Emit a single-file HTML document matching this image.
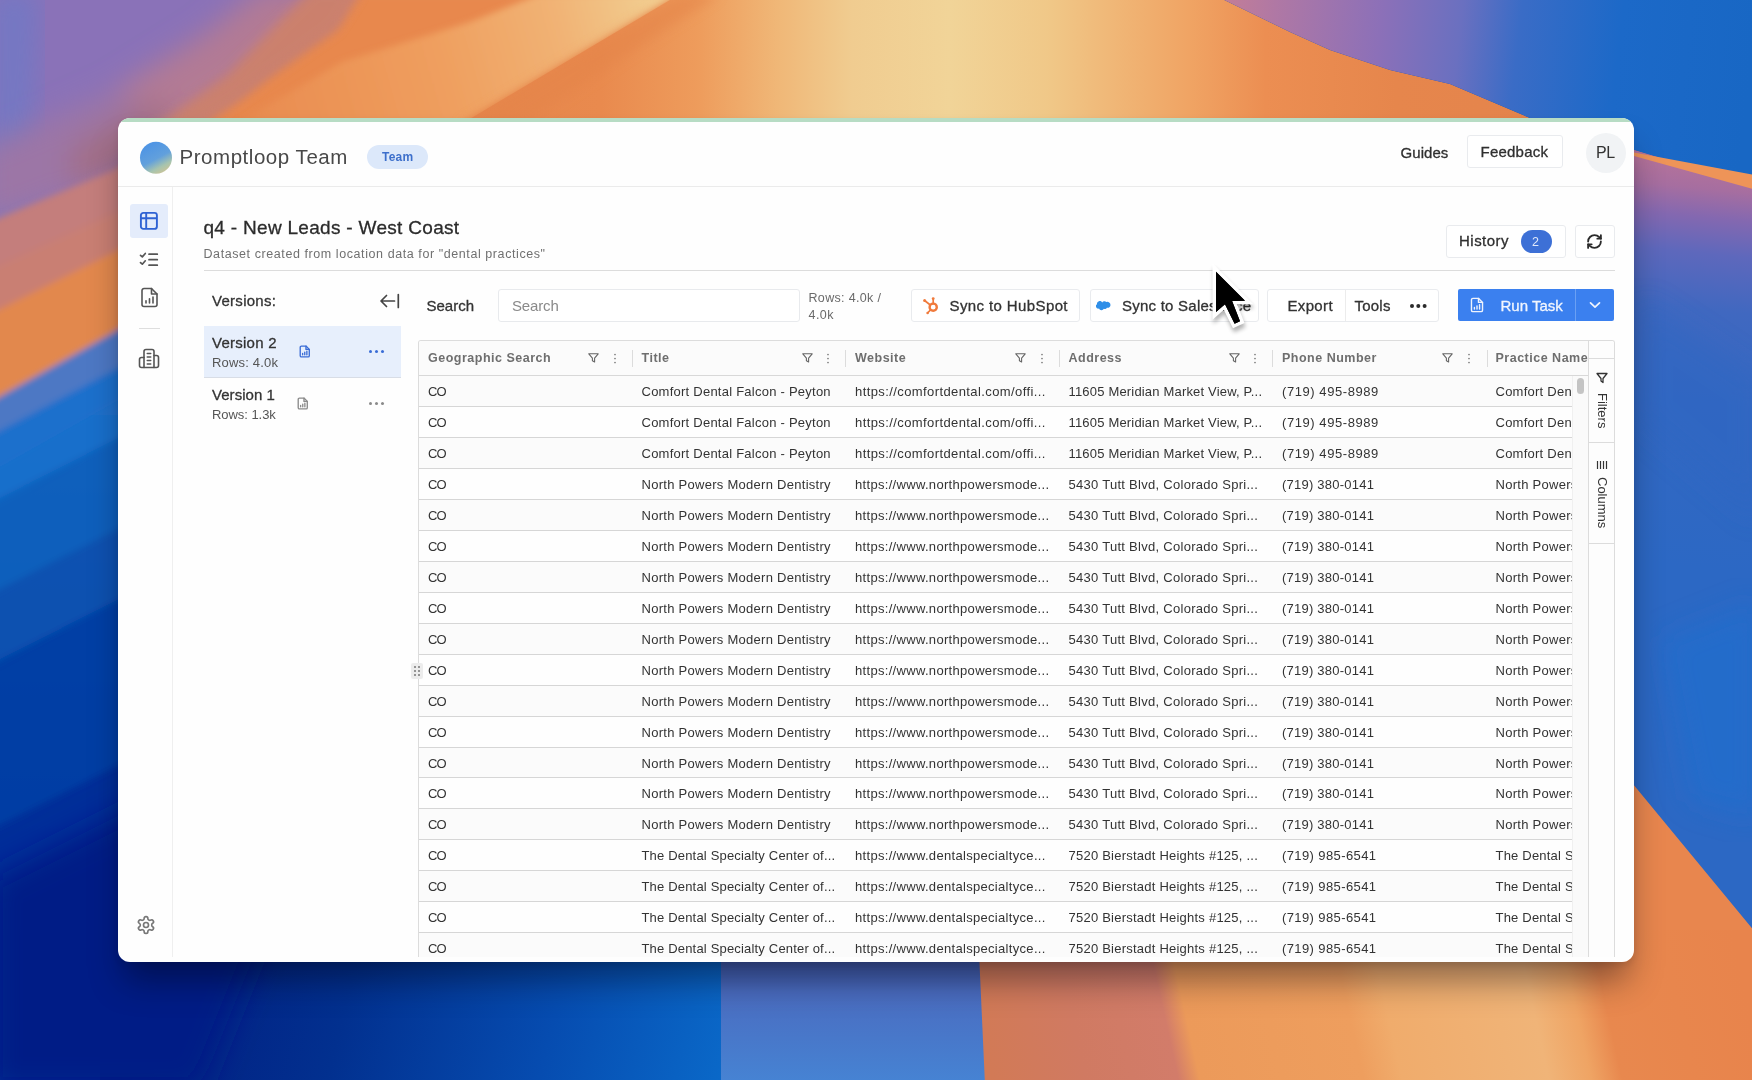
<!DOCTYPE html>
<html lang="en"><head><meta charset="utf-8"><title>Promptloop Team</title>
<style>
*{box-sizing:border-box;margin:0;padding:0}
html,body{width:1752px;height:1080px;overflow:hidden;background:#0a3a9c}
body{position:relative;font-family:"Liberation Sans",Arial,sans-serif;color:#333;-webkit-font-smoothing:antialiased}
#bg{position:absolute;left:0;top:0;display:block}
#shadow{position:absolute;left:118px;top:118px;width:1516px;height:844px;border-radius:12px;box-shadow:0 24px 34px -6px rgba(0,0,15,.42),0 3px 6px rgba(0,0,15,.08)}
#win{position:absolute;left:118px;top:118px;width:1516px;height:844px;border-radius:12px;background:#fefefe;overflow:hidden}
#greenline{position:absolute;left:0;top:0;width:100%;height:3.5px;background:#b7dcc4}
#app{will-change:transform;position:absolute;left:-118px;top:-118px;width:1752px;height:1075px;overflow:hidden;clip-path:inset(0 0 118px 0)}
.a{position:absolute}
.t{position:absolute;white-space:nowrap;line-height:1}
.m{-webkit-text-stroke:.3px currentColor}
.hl{position:absolute;height:1px;background:#e6e6e6}
.vl{position:absolute;width:1px;background:#e9e9e9}
.btn{position:absolute;border:1px solid #e9ebee;border-radius:3px;background:#fff}
/* grid */
#grid{position:absolute;left:418px;top:339.5px;border-radius:3px 3px 0 0;width:1197px;height:640px;border:1px solid #dcdcdc;border-bottom:none;background:#fff;overflow:hidden}
#ghead{position:absolute;left:0;top:0;width:1169px;height:35px;background:#fbfbfb;border-bottom:1px solid #d8d8d8}
.h{position:absolute;top:0;height:35px;width:213.5px}
.h .ht{position:absolute;left:9px;top:11px;font-size:12.5px;font-weight:700;color:#6e6e6e;line-height:1;white-space:nowrap;letter-spacing:.5px}
.h .sep{position:absolute;left:-1px;top:9px;width:1px;height:17px;background:#dcdcdc}
.h svg.f{position:absolute;right:33.5px;top:12px}
.h svg.d{position:absolute;right:16px;top:12px}
#rows{position:absolute;left:0;top:0;width:1153px;height:640px;overflow:hidden}
.row{position:absolute;left:0;width:1153px;height:31px;border-bottom:1px solid #d6d6d6;background:#fefefe}
.row.odd{background:#fbfbfb}
.c{position:absolute;top:0;height:30px;width:213.5px;overflow:hidden;white-space:nowrap;font-size:13px;line-height:32.6px;color:#333;padding-left:9px}
.c0{left:0}.c1{left:213.5px}.c2{left:427px}.c3{left:640.5px}.c4{left:854px}.c5{left:1067.5px}
#vscroll{position:absolute;left:1153px;top:35px;width:16px;height:610px;background:#fafafa;border-left:1px solid #f0f0f0}
#thumb{position:absolute;left:4px;top:2px;width:7px;height:16px;border-radius:4px;background:#c4c4c4}
#sidebar2{position:absolute;left:1169px;top:0;width:27px;height:640px;background:#fdfdfd;border-left:1px solid #dcdcdc}
.sb-line{position:absolute;left:0;width:27px;height:1px;background:#dcdcdc}
.sb-ico{position:absolute}
.sb-txt{position:absolute;left:6px;font-size:13px;line-height:14px;color:#333;writing-mode:vertical-rl;white-space:nowrap}
#handle{position:absolute;left:411px;top:663px;width:12px;height:16px;background:#ececec;border-radius:2px}
#handle i{position:absolute;width:2px;height:2px;background:#777;border-radius:1px}
#cursor{position:absolute;left:1200px;top:260px}
#t_brand{letter-spacing:.54px}#t_team{letter-spacing:.23px}#t_guides{letter-spacing:.06px}#t_feedback{letter-spacing:.22px}
#t_pl{letter-spacing:-.5px}#t_title{letter-spacing:.3px}#t_sub{letter-spacing:.58px}#t_versions{letter-spacing:.28px}
#t_v2{letter-spacing:.25px}#t_r40{letter-spacing:.19px}#t_v1{letter-spacing:.04px}#t_r13{letter-spacing:-.05px}
#t_searchp{letter-spacing:-.16px}#t_rows1{letter-spacing:.33px}#t_rows2{letter-spacing:.46px}#t_hub{letter-spacing:.39px}
#t_export{letter-spacing:.34px}#t_tools{letter-spacing:.23px}#t_history{letter-spacing:.48px}
#t_sf{letter-spacing:.24px}

</style></head>
<body>
<svg id="bg" width="1752" height="1080" viewBox="0 0 1752 1080" preserveAspectRatio="none">
<defs>
<filter id="b3" x="-10%" y="-10%" width="120%" height="120%"><feGaussianBlur stdDeviation="3"/></filter>
<filter id="b6" x="-10%" y="-10%" width="120%" height="120%"><feGaussianBlur stdDeviation="6"/></filter>
<filter id="b14" x="-10%" y="-10%" width="120%" height="120%"><feGaussianBlur stdDeviation="14"/></filter>
<filter id="b30" x="-20%" y="-20%" width="140%" height="140%"><feGaussianBlur stdDeviation="30"/></filter>
<linearGradient id="gTopL" gradientUnits="userSpaceOnUse" x1="0" y1="0" x2="1296" y2="769">
 <stop offset="0" stop-color="#7c74be"/><stop offset=".07" stop-color="#8872b8"/><stop offset=".125" stop-color="#9674ac"/><stop offset=".16" stop-color="#b67a92"/><stop offset=".195" stop-color="#d8846e"/><stop offset=".225" stop-color="#e8884e"/><stop offset=".4" stop-color="#e98a4e"/>
</linearGradient>
<linearGradient id="gBand" gradientUnits="userSpaceOnUse" x1="250" y1="118" x2="660" y2="0">
 <stop offset="0" stop-color="#e98c50"/><stop offset=".45" stop-color="#ef9e5e"/><stop offset=".75" stop-color="#f1b274"/><stop offset="1" stop-color="#f2cf92"/>
</linearGradient>
<linearGradient id="gMount" gradientUnits="userSpaceOnUse" x1="470" y1="0" x2="1560" y2="0">
 <stop offset="0" stop-color="#e6864c"/><stop offset=".12" stop-color="#e98a4e"/><stop offset=".21" stop-color="#ee9c5c"/><stop offset=".285" stop-color="#f0b878"/><stop offset=".35" stop-color="#f0cc90"/><stop offset=".44" stop-color="#f1d498"/><stop offset=".53" stop-color="#f0c888"/><stop offset=".6" stop-color="#f0b474"/><stop offset=".66" stop-color="#f0a464"/><stop offset=".73" stop-color="#ec8e52"/><stop offset=".85" stop-color="#e6864c"/><stop offset="1" stop-color="#e4844c"/>
</linearGradient>
<linearGradient id="gSkyR" gradientUnits="userSpaceOnUse" x1="1222" y1="0" x2="1752" y2="60">
 <stop offset="0" stop-color="#c47e96"/><stop offset=".1" stop-color="#b078a4"/><stop offset=".3" stop-color="#8c70b8"/><stop offset=".45" stop-color="#6a70c0"/><stop offset=".56" stop-color="#3a6cc6"/><stop offset=".75" stop-color="#1c69c8"/><stop offset="1" stop-color="#1867c4"/>
</linearGradient>
<linearGradient id="gRight" gradientUnits="userSpaceOnUse" x1="1660" y1="160" x2="1620" y2="560">
 <stop offset="0" stop-color="#b4729a"/><stop offset=".06" stop-color="#a66ea0"/><stop offset=".13" stop-color="#8468b0"/><stop offset=".22" stop-color="#5e68bc"/><stop offset=".36" stop-color="#4068c0"/><stop offset=".6" stop-color="#3368c2"/><stop offset="1" stop-color="#2c68c4"/>
</linearGradient>
<linearGradient id="gLeftB" gradientUnits="userSpaceOnUse" x1="0" y1="400" x2="0" y2="1080">
 <stop offset="0" stop-color="#2a6cc4"/><stop offset=".25" stop-color="#0a5cb8"/><stop offset=".5" stop-color="#0848a8"/><stop offset=".75" stop-color="#02309c"/><stop offset="1" stop-color="#012488"/>
</linearGradient>
<linearGradient id="gBotL" gradientUnits="userSpaceOnUse" x1="150" y1="940" x2="720" y2="1080">
 <stop offset="0" stop-color="#011c80"/><stop offset=".35" stop-color="#02308f"/><stop offset=".7" stop-color="#064cb0"/><stop offset="1" stop-color="#0a68c8"/>
</linearGradient>
<linearGradient id="gBotM" x1="0" y1="0" x2="0" y2="1">
 <stop offset="0" stop-color="#3a4e9c"/><stop offset=".4" stop-color="#4a6cc0"/><stop offset="1" stop-color="#4684d4"/>
</linearGradient>
<linearGradient id="gBotO" gradientUnits="userSpaceOnUse" x1="980" y1="1020" x2="1716.4" y2="858">
 <stop offset="0" stop-color="#d27a56"/><stop offset=".12" stop-color="#d07a62"/><stop offset=".24" stop-color="#d27c6a"/><stop offset=".268" stop-color="#ec9a5a"/><stop offset=".48" stop-color="#ee9e5e"/><stop offset=".53" stop-color="#f0ac6c"/><stop offset=".72" stop-color="#f0b478"/><stop offset=".775" stop-color="#efa464"/><stop offset=".815" stop-color="#e8884e"/><stop offset="1" stop-color="#e8844c"/>
</linearGradient>
</defs>
<rect width="1752" height="1080" fill="#0a4aa8"/>
<!-- left blue column -->
<rect x="-5" y="380" width="300" height="705" fill="url(#gLeftB)"/>
<!-- top-left purple to orange -->
<rect x="-5" y="-5" width="900" height="420" fill="#8a72b8"/>
<polygon points="-10,-10 40,-10 30,200 -10,260" fill="#6c7ac8" opacity=".7" filter="url(#b14)"/>
<g filter="url(#b14)">
<polygon points="-20,150 114,91 205,34 262,-12 460,-12 350,25 280,68 235,100 195,125 118,178 -20,228" fill="#b27a94"/>
<polygon points="-20,150 114,91 150,110 118,178 -20,228" fill="#9c76a6"/>
<polygon points="70,150 118,118 160,100 175,120 118,172 70,190" fill="#a26e86"/>
</g>
<polygon points="358,-12 335,25 274,68 232,100 192,125 122,178 118,300 900,300 900,-12" fill="#e8884e" filter="url(#b6)"/>
<polygon points="312,-12 362,-12 336,29 274,73 232,105 192,130 150,130 228,74" fill="#d08266" opacity=".85" filter="url(#b6)"/>
<!-- sunlit band -->
<polygon points="236,124 342,62 470,22 540,-6 682,-6 462,124" fill="url(#gBand)" filter="url(#b3)"/>
<!-- main mountain -->
<polygon points="458,126 680,-6 1212,-6 1290,32 1330,50 1390,70 1450,84 1530,118 1634,150 1760,188 1760,300 458,300" fill="url(#gMount)"/>
<polygon points="458,126 680,-6 720,-6 520,126" fill="#e4844a" opacity=".55" filter="url(#b6)"/>
<!-- sky right of mountain -->
<polygon points="1212,-6 1290,32 1330,50 1390,70 1450,84 1530,118 1634,150 1760,188 1760,-6" fill="url(#gSkyR)"/>
<!-- right strip below ridge -->
<polygon points="1600,140 1634,150 1760,188 1760,940 1600,760" fill="url(#gRight)"/>
<polygon points="1640,300 1760,380 1760,520 1640,420" fill="#2f66c2" opacity=".5" filter="url(#b14)"/>
<polygon points="1660,640 1760,600 1760,820 1690,800" fill="#1c70d0" opacity=".55" filter="url(#b14)"/>
<!-- ridge highlight -->
<polygon points="1600,143 1634,152.500 1760,176 1760,191 1634,156 1600,147" fill="#ee9458"/>
<!-- orange lower right -->
<polygon points="1600,744 1634.600,786 1760,938 1760,1085 1600,1085" fill="#e8864e"/>
<!-- left strip bands -->
<g filter="url(#b3)">
<polygon points="-10,222 118,168 150,140 200,150 118,252 -10,314" fill="#c47e7c"/>
<polygon points="-10,270 118,212 160,190 118,252 -10,314" fill="#ca8070" opacity=".8"/>
<polygon points="-10,314 118,250 215,150 260,150 200,280 118,330 -10,402" fill="#e2884e"/>
<polygon points="-10,402 118,330 200,280 200,350 118,400 -10,472" fill="#4e78c4"/>
<polygon points="-10,436 118,368 200,322 200,400 118,440 -10,510" fill="#1a70cc" opacity=".92"/>
<polygon points="-10,503 118,438 200,393 200,490 118,530 -10,600" fill="#0c60bc" opacity=".92"/>
<polygon points="-10,594 118,529 200,484 200,560 118,602 -10,670" fill="#0850b0" opacity=".92"/>
<polygon points="-10,665 118,600 200,555 200,730 118,770 -10,836" fill="#063ea4" opacity=".92"/>
<polygon points="-10,830 118,765 200,720 200,1090 -10,1090" fill="#022c98" opacity=".92"/>
</g>
<!-- bottom strip -->
<rect x="100" y="930" width="625" height="155" fill="url(#gBotL)"/>
<polygon points="-10,880 150,800 260,940 200,1090 -10,1090" fill="#011e86" filter="url(#b14)"/>
<rect x="721" y="930" width="268" height="155" fill="url(#gBotM)"/>
<polygon points="978,930 1760,930 1760,1085 985,1085" fill="url(#gBotO)"/>
</svg>

<div id="shadow"></div>
<div id="win">
<div id="greenline"></div>
<div id="app">
<!-- header -->
<svg class="a" style="left:139px;top:141px" width="34" height="34" viewBox="0 0 34 34"><defs><linearGradient id="lg" x1=".3" y1=".1" x2=".75" y2=".95"><stop offset="0" stop-color="#4f95e4"/><stop offset=".5" stop-color="#62a0dc"/><stop offset=".8" stop-color="#a7c4ae"/><stop offset="1" stop-color="#c8c49a"/></linearGradient></defs><circle cx="17" cy="16.7" r="16" fill="url(#lg)"/></svg>
<div class="t" style="left:179.500px;top:147.3px;font-size:20.5px;color:#484848" id="t_brand">Promptloop Team</div>
<div class="a" style="left:367px;top:144.5px;width:61px;height:24px;border-radius:12px;background:#dce8fa"></div>
<div class="t" style="left:382px;top:151px;font-size:12px;font-weight:700;color:#3d6fcb" id="t_team">Team</div>
<div class="t m" style="left:1400.5px;top:145.2px;font-size:15px;color:#2f2f2f" id="t_guides">Guides</div>
<div class="btn" style="left:1466.5px;top:134.5px;width:96px;height:33.5px"></div>
<div class="t m" style="left:1480.5px;top:144.3px;font-size:15px;color:#2f2f2f" id="t_feedback">Feedback</div>
<div class="a" style="left:1586px;top:132.5px;width:40px;height:40px;border-radius:20px;background:#f1f3f5"></div>
<div class="t" style="left:1596px;top:144.5px;font-size:16px;color:#333" id="t_pl">PL</div>
<div class="hl" style="left:118px;top:186px;width:1516px;background:#ebebeb"></div>
<!-- left nav -->
<div class="vl" style="left:172px;top:187px;height:770px;background:#efefef"></div>
<div class="a" style="left:129.5px;top:204px;width:38.5px;height:33.5px;border-radius:3px;background:#e4ecfb"></div>
<svg class="a" style="left:139px;top:211px" width="20" height="20" viewBox="0 0 20 20" fill="none" stroke="#2f62d3" stroke-width="1.9" stroke-linejoin="round"><rect x="1.9" y="1.9" width="16" height="16" rx="2.4"/><path d="M1.9 7.2h16M7.2 1.9v16"/></svg>
<svg class="a" style="left:139px;top:251px" width="20" height="18" viewBox="0 0 20 18" fill="none" stroke="#555" stroke-width="1.7" stroke-linecap="round" stroke-linejoin="round"><path d="M1.5 4.3l1.8 1.6 3-3.4M1.5 11.6l1.8 1.6 3-3.4M10 3.2h8.3M10 8.7h8.3M10 14.2h8.3"/></svg>
<svg class="a" style="left:139.5px;top:287px" width="19" height="21" viewBox="0 0 19 21" fill="none" stroke="#555" stroke-width="1.6" stroke-linecap="round" stroke-linejoin="round"><path d="M11.5 1.5H4a2 2 0 0 0-2 2v14a2 2 0 0 0 2 2h11a2 2 0 0 0 2-2V7z"/><path d="M11.5 1.5V7H17"/><path d="M6 16v-2.2M9.5 16v-4.3M13 16v-6"/></svg>
<div class="hl" style="left:138.5px;top:327.5px;width:21px;background:#dedede"></div>
<svg class="a" style="left:138px;top:348px" width="22" height="21" viewBox="0 0 22 21" fill="none" stroke="#555" stroke-width="1.6" stroke-linecap="round" stroke-linejoin="round"><path d="M6 19.5V3.5a2 2 0 0 1 2-2h6a2 2 0 0 1 2 2v16z"/><path d="M6 9.5H3.5a2 2 0 0 0-2 2v6a2 2 0 0 0 2 2H6M16 7.5h2.5a2 2 0 0 1 2 2v8a2 2 0 0 1-2 2H16"/><path d="M9.3 5.5h3.4M9.3 9h3.4M9.3 12.5h3.4M9.3 16h3.4"/></svg>
<svg class="a" style="left:135.5px;top:915px" width="20" height="20" viewBox="0 0 24 24" fill="none" stroke="#777" stroke-width="2" stroke-linecap="round" stroke-linejoin="round"><path d="M12.22 2h-.44a2 2 0 0 0-2 2v.18a2 2 0 0 1-1 1.73l-.43.25a2 2 0 0 1-2 0l-.15-.08a2 2 0 0 0-2.73.73l-.22.38a2 2 0 0 0 .73 2.73l.15.1a2 2 0 0 1 1 1.72v.51a2 2 0 0 1-1 1.74l-.15.09a2 2 0 0 0-.73 2.73l.22.38a2 2 0 0 0 2.73.73l.15-.08a2 2 0 0 1 2 0l.43.25a2 2 0 0 1 1 1.73V20a2 2 0 0 0 2 2h.44a2 2 0 0 0 2-2v-.18a2 2 0 0 1 1-1.73l.43-.25a2 2 0 0 1 2 0l.15.08a2 2 0 0 0 2.73-.73l.22-.39a2 2 0 0 0-.73-2.73l-.15-.08a2 2 0 0 1-1-1.74v-.5a2 2 0 0 1 1-1.74l.15-.09a2 2 0 0 0 .73-2.73l-.22-.38a2 2 0 0 0-2.73-.73l-.15.08a2 2 0 0 1-2 0l-.43-.25a2 2 0 0 1-1-1.73V4a2 2 0 0 0-2-2z"/><circle cx="12" cy="12" r="3"/></svg>
<!-- title -->
<div class="t m" style="left:203.5px;top:218.1px;font-size:19px;color:#2b2b2b" id="t_title">q4 - New Leads - West Coast</div>
<div class="t" style="left:203.5px;top:248px;font-size:12.5px;color:#707070" id="t_sub">Dataset created from location data for "dental practices"</div>
<div class="btn" style="left:1445.5px;top:224.5px;width:120px;height:33px"></div>
<div class="t m" style="left:1459px;top:233.3px;font-size:15px;color:#2f2f2f" id="t_history">History</div>
<div class="a" style="left:1520.5px;top:230px;width:31.5px;height:22.5px;border-radius:11.5px;background:#3d70d6"></div>
<div class="t" style="left:1532px;top:235.5px;font-size:12.5px;color:#dfe8fa" id="t_two">2</div>
<div class="btn" style="left:1574.5px;top:224.5px;width:40px;height:33px"></div>
<svg class="a" style="left:1586px;top:232.5px" width="17" height="17" viewBox="0 0 24 24" fill="none" stroke="#2b2b2b" stroke-width="2.6" stroke-linecap="round" stroke-linejoin="round"><path d="M3 12a9 9 0 0 1 9-9 9.75 9.75 0 0 1 6.74 2.74L21 8"/><path d="M21 3v5h-5"/><path d="M21 12a9 9 0 0 1-9 9 9.75 9.75 0 0 1-6.74-2.74L3 16"/><path d="M8 16H3v5"/></svg>
<div class="hl" style="left:203.5px;top:270px;width:1411px;background:#dcdcdc"></div>
<!-- versions -->
<div class="t m" style="left:212px;top:293.2px;font-size:15px;color:#333" id="t_versions">Versions:</div>
<svg class="a" style="left:379px;top:292px" width="22" height="18" viewBox="0 0 22 18" fill="none" stroke="#444" stroke-width="1.7" stroke-linecap="round" stroke-linejoin="round"><path d="M15.5 9H2.2M7.5 3.5L2 9l5.5 5.5M19.3 2.5v13"/></svg>
<div class="a" style="left:203.5px;top:326px;width:197px;height:51.5px;background:#e7effc;border-bottom:1px solid #d8dde6"></div>
<div class="t m" style="left:212px;top:334.9px;font-size:15px;color:#333" id="t_v2">Version 2</div>
<div class="t" style="left:212px;top:355.5px;font-size:13px;color:#555" id="t_r40">Rows: 4.0k</div>
<svg class="a" style="left:299px;top:344.5px" width="11.5" height="13" viewBox="0 0 19 21" fill="none" stroke="#3a6cd6" stroke-width="2.2" stroke-linecap="round" stroke-linejoin="round"><path d="M11.5 1.5H4a2 2 0 0 0-2 2v14a2 2 0 0 0 2 2h11a2 2 0 0 0 2-2V7z"/><path d="M11.5 1.5V7H17"/><path d="M6 16v-2.2M9.5 16v-4.3M13 16v-6"/></svg>
<div class="a" style="left:369px;top:349.6px;width:3px;height:3px;border-radius:2px;background:#3a6cd6;box-shadow:6px 0 0 #3a6cd6,12px 0 0 #3a6cd6"></div>
<div class="t m" style="left:212px;top:387.2px;font-size:15px;color:#333" id="t_v1">Version 1</div>
<div class="t" style="left:212px;top:407.5px;font-size:13px;color:#555" id="t_r13">Rows: 1.3k</div>
<svg class="a" style="left:297px;top:396.800px" width="11.5" height="13" viewBox="0 0 19 21" fill="none" stroke="#8a8a8a" stroke-width="2.2" stroke-linecap="round" stroke-linejoin="round"><path d="M11.5 1.5H4a2 2 0 0 0-2 2v14a2 2 0 0 0 2 2h11a2 2 0 0 0 2-2V7z"/><path d="M11.5 1.5V7H17"/><path d="M6 16v-2.2M9.5 16v-4.3M13 16v-6"/></svg>
<div class="a" style="left:369px;top:401.8px;width:3px;height:3px;border-radius:2px;background:#8a8a8a;box-shadow:6px 0 0 #8a8a8a,12px 0 0 #8a8a8a"></div>
<!-- toolbar -->
<div class="t m" style="left:426.5px;top:297.6px;font-size:15px;color:#333" id="t_searchl">Search</div>
<div class="btn" style="left:498px;top:288.5px;width:302px;height:33.5px;border-color:#e8eaed"></div>
<div class="t" style="left:512px;top:297.800px;font-size:15px;color:#8a8a8a" id="t_searchp">Search</div>
<div class="t" style="left:808.5px;top:291.6px;font-size:12.5px;color:#6a6a6a" id="t_rows1">Rows: 4.0k /</div>
<div class="t" style="left:808.5px;top:308.6px;font-size:12.5px;color:#6a6a6a" id="t_rows2">4.0k</div>
<div class="btn" style="left:911px;top:288.5px;width:169px;height:33.5px"></div>
<svg class="a" style="left:922.2px;top:296.2px" width="18" height="19" viewBox="0 0 18 19" fill="none" stroke="#f07a3c" stroke-linecap="round"><circle cx="11.2" cy="11.2" r="3.600" stroke-width="2.400"/><path d="M11.2 7.4V3.6" stroke-width="1.7"/><circle cx="11.2" cy="2.6" r="1.4" fill="#f07a3c" stroke="none"/><path d="M8.3 9L3.2 5" stroke-width="1.7"/><circle cx="2.6" cy="4.4" r="1.5" fill="#f07a3c" stroke="none"/><path d="M8.6 13.9l-2.6 2.6" stroke-width="1.7"/><circle cx="5.6" cy="17" r="1.3" fill="#f07a3c" stroke="none"/></svg>
<div class="t m" style="left:949.5px;top:297.6px;font-size:15px;color:#333" id="t_hub">Sync to HubSpot</div>
<div class="btn" style="left:1089.5px;top:288.5px;width:169px;height:33.5px"></div>
<svg class="a" style="left:1096px;top:300.700px" width="15" height="11" viewBox="0 0 15 11"><path d="M6.2 1.4a2.6 2.6 0 0 1 4.2-.3 3 3 0 0 1 4.1 2.8 3 3 0 0 1-3.6 2.9 2.3 2.3 0 0 1-3 1 2.7 2.7 0 0 1-4.9-.3A2.4 2.4 0 0 1 1 3.200a2.800 2.800 0 0 1 5.200-1.800z" fill="#2f8fe8"/></svg>
<div class="t m" style="left:1122px;top:297.6px;font-size:15px;color:#333" id="t_sf">Sync to Salesforce</div>
<div class="btn" style="left:1267px;top:289px;width:172px;height:32.5px"></div>
<div class="vl" style="left:1344.5px;top:290px;height:31px;background:#ececec"></div>
<div class="t m" style="left:1287.5px;top:297.6px;font-size:15px;color:#333" id="t_export">Export</div>
<div class="t m" style="left:1354.5px;top:297.6px;font-size:15px;color:#333" id="t_tools">Tools</div>
<div class="a" style="left:1409.5px;top:303.5px;width:4px;height:4px;border-radius:2px;background:#2b2b2b;box-shadow:6.3px 0 0 #2b2b2b,12.6px 0 0 #2b2b2b"></div>
<div class="a" style="left:1457.5px;top:289px;width:156.5px;height:32px;border-radius:2px;background:#3b80ef"></div>
<div class="vl" style="left:1574.5px;top:289px;height:32px;background:#6aa0f4"></div>
<svg class="a" style="left:1469.5px;top:296.5px" width="14" height="16" viewBox="0 0 19 21" fill="none" stroke="#eef3fd" stroke-width="1.9" stroke-linecap="round" stroke-linejoin="round"><path d="M11.5 1.5H4a2 2 0 0 0-2 2v14a2 2 0 0 0 2 2h11a2 2 0 0 0 2-2V7z"/><path d="M11.5 1.5V7H17"/><path d="M6 16v-2.2M9.500 16v-4.300M13 16v-6"/></svg>
<div class="t m" style="left:1500.5px;top:297.6px;font-size:15px;color:#f2f6fe" id="t_run">Run Task</div>
<svg class="a" style="left:1588.5px;top:301px" width="12" height="8" viewBox="0 0 12 8" fill="none" stroke="#eef3fd" stroke-width="1.7" stroke-linecap="round" stroke-linejoin="round"><path d="M1.500 1.800L6 6.200l4.500-4.400"/></svg>

<div id="grid">
<div id="ghead">
<div class="h" style="left:0"><span class="ht">Geographic Search</span><svg class="f" width="11" height="10" viewBox="0 0 11 10"><path d="M.8.800h9.400L6.600 5.200v3.700L4.400 7.700V5.200z" fill="none" stroke="#666" stroke-width="1.100" stroke-linejoin="round"/></svg><svg class="d" width="4" height="11" viewBox="0 0 4 11"><circle cx="2" cy="1.500" r=".85" fill="#7a7a7a"/><circle cx="2" cy="5.500" r=".85" fill="#7a7a7a"/><circle cx="2" cy="9.500" r=".85" fill="#7a7a7a"/></svg></div>
<div class="h" style="left:213.5px"><i class="sep"></i><span class="ht">Title</span><svg class="f" width="11" height="10" viewBox="0 0 11 10"><path d="M.8.800h9.400L6.600 5.200v3.700L4.400 7.700V5.200z" fill="none" stroke="#666" stroke-width="1.100" stroke-linejoin="round"/></svg><svg class="d" width="4" height="11" viewBox="0 0 4 11"><circle cx="2" cy="1.500" r=".85" fill="#7a7a7a"/><circle cx="2" cy="5.500" r=".85" fill="#7a7a7a"/><circle cx="2" cy="9.500" r=".85" fill="#7a7a7a"/></svg></div>
<div class="h" style="left:427px"><i class="sep"></i><span class="ht">Website</span><svg class="f" width="11" height="10" viewBox="0 0 11 10"><path d="M.8.800h9.400L6.600 5.200v3.700L4.400 7.700V5.200z" fill="none" stroke="#666" stroke-width="1.100" stroke-linejoin="round"/></svg><svg class="d" width="4" height="11" viewBox="0 0 4 11"><circle cx="2" cy="1.500" r=".85" fill="#7a7a7a"/><circle cx="2" cy="5.500" r=".85" fill="#7a7a7a"/><circle cx="2" cy="9.500" r=".85" fill="#7a7a7a"/></svg></div>
<div class="h" style="left:640.5px"><i class="sep"></i><span class="ht">Address</span><svg class="f" width="11" height="10" viewBox="0 0 11 10"><path d="M.8.800h9.400L6.600 5.200v3.700L4.400 7.700V5.200z" fill="none" stroke="#666" stroke-width="1.100" stroke-linejoin="round"/></svg><svg class="d" width="4" height="11" viewBox="0 0 4 11"><circle cx="2" cy="1.500" r=".85" fill="#7a7a7a"/><circle cx="2" cy="5.500" r=".85" fill="#7a7a7a"/><circle cx="2" cy="9.500" r=".85" fill="#7a7a7a"/></svg></div>
<div class="h" style="left:854px"><i class="sep"></i><span class="ht">Phone Number</span><svg class="f" width="11" height="10" viewBox="0 0 11 10"><path d="M.8.800h9.400L6.600 5.200v3.700L4.400 7.700V5.200z" fill="none" stroke="#666" stroke-width="1.100" stroke-linejoin="round"/></svg><svg class="d" width="4" height="11" viewBox="0 0 4 11"><circle cx="2" cy="1.500" r=".85" fill="#7a7a7a"/><circle cx="2" cy="5.500" r=".85" fill="#7a7a7a"/><circle cx="2" cy="9.500" r=".85" fill="#7a7a7a"/></svg></div>
<div class="h" style="left:1067.5px;width:102px;overflow:hidden"><i class="sep" style="left:0"></i><span class="ht">Practice Name</span></div>
</div>

<div id="rows">
<div class="row odd" style="top:35px"><div class="c c0"><span style="letter-spacing:-0.8px">CO</span></div><div class="c c1"><span style="letter-spacing:0.242px">Comfort Dental Falcon - Peyton</span></div><div class="c c2"><span style="letter-spacing:0.403px">https://comfortdental.com/offi...</span></div><div class="c c3"><span style="letter-spacing:0.181px">11605 Meridian Market View, P...</span></div><div class="c c4"><span style="letter-spacing:0.569px">(719) 495-8989</span></div><div class="c c5"><span style="letter-spacing:0.25px">Comfort Dental</span></div></div>
<div class="row" style="top:66px"><div class="c c0"><span style="letter-spacing:-0.8px">CO</span></div><div class="c c1"><span style="letter-spacing:0.242px">Comfort Dental Falcon - Peyton</span></div><div class="c c2"><span style="letter-spacing:0.403px">https://comfortdental.com/offi...</span></div><div class="c c3"><span style="letter-spacing:0.181px">11605 Meridian Market View, P...</span></div><div class="c c4"><span style="letter-spacing:0.569px">(719) 495-8989</span></div><div class="c c5"><span style="letter-spacing:0.25px">Comfort Dental</span></div></div>
<div class="row odd" style="top:97px"><div class="c c0"><span style="letter-spacing:-0.8px">CO</span></div><div class="c c1"><span style="letter-spacing:0.242px">Comfort Dental Falcon - Peyton</span></div><div class="c c2"><span style="letter-spacing:0.403px">https://comfortdental.com/offi...</span></div><div class="c c3"><span style="letter-spacing:0.181px">11605 Meridian Market View, P...</span></div><div class="c c4"><span style="letter-spacing:0.569px">(719) 495-8989</span></div><div class="c c5"><span style="letter-spacing:0.25px">Comfort Dental</span></div></div>
<div class="row" style="top:128px"><div class="c c0"><span style="letter-spacing:-0.8px">CO</span></div><div class="c c1"><span style="letter-spacing:0.277px">North Powers Modern Dentistry</span></div><div class="c c2"><span style="letter-spacing:0.314px">https://www.northpowersmode...</span></div><div class="c c3"><span style="letter-spacing:0.279px">5430 Tutt Blvd, Colorado Spri...</span></div><div class="c c4"><span style="letter-spacing:0.23px">(719) 380-0141</span></div><div class="c c5"><span style="letter-spacing:0.28px">North Powers</span></div></div>
<div class="row odd" style="top:159px"><div class="c c0"><span style="letter-spacing:-0.8px">CO</span></div><div class="c c1"><span style="letter-spacing:0.277px">North Powers Modern Dentistry</span></div><div class="c c2"><span style="letter-spacing:0.314px">https://www.northpowersmode...</span></div><div class="c c3"><span style="letter-spacing:0.279px">5430 Tutt Blvd, Colorado Spri...</span></div><div class="c c4"><span style="letter-spacing:0.23px">(719) 380-0141</span></div><div class="c c5"><span style="letter-spacing:0.28px">North Powers</span></div></div>
<div class="row" style="top:190px"><div class="c c0"><span style="letter-spacing:-0.8px">CO</span></div><div class="c c1"><span style="letter-spacing:0.277px">North Powers Modern Dentistry</span></div><div class="c c2"><span style="letter-spacing:0.314px">https://www.northpowersmode...</span></div><div class="c c3"><span style="letter-spacing:0.279px">5430 Tutt Blvd, Colorado Spri...</span></div><div class="c c4"><span style="letter-spacing:0.23px">(719) 380-0141</span></div><div class="c c5"><span style="letter-spacing:0.28px">North Powers</span></div></div>
<div class="row odd" style="top:221px"><div class="c c0"><span style="letter-spacing:-0.8px">CO</span></div><div class="c c1"><span style="letter-spacing:0.277px">North Powers Modern Dentistry</span></div><div class="c c2"><span style="letter-spacing:0.314px">https://www.northpowersmode...</span></div><div class="c c3"><span style="letter-spacing:0.279px">5430 Tutt Blvd, Colorado Spri...</span></div><div class="c c4"><span style="letter-spacing:0.23px">(719) 380-0141</span></div><div class="c c5"><span style="letter-spacing:0.28px">North Powers</span></div></div>
<div class="row" style="top:252px"><div class="c c0"><span style="letter-spacing:-0.8px">CO</span></div><div class="c c1"><span style="letter-spacing:0.277px">North Powers Modern Dentistry</span></div><div class="c c2"><span style="letter-spacing:0.314px">https://www.northpowersmode...</span></div><div class="c c3"><span style="letter-spacing:0.279px">5430 Tutt Blvd, Colorado Spri...</span></div><div class="c c4"><span style="letter-spacing:0.23px">(719) 380-0141</span></div><div class="c c5"><span style="letter-spacing:0.28px">North Powers</span></div></div>
<div class="row odd" style="top:283px"><div class="c c0"><span style="letter-spacing:-0.8px">CO</span></div><div class="c c1"><span style="letter-spacing:0.277px">North Powers Modern Dentistry</span></div><div class="c c2"><span style="letter-spacing:0.314px">https://www.northpowersmode...</span></div><div class="c c3"><span style="letter-spacing:0.279px">5430 Tutt Blvd, Colorado Spri...</span></div><div class="c c4"><span style="letter-spacing:0.23px">(719) 380-0141</span></div><div class="c c5"><span style="letter-spacing:0.28px">North Powers</span></div></div>
<div class="row" style="top:314px"><div class="c c0"><span style="letter-spacing:-0.8px">CO</span></div><div class="c c1"><span style="letter-spacing:0.277px">North Powers Modern Dentistry</span></div><div class="c c2"><span style="letter-spacing:0.314px">https://www.northpowersmode...</span></div><div class="c c3"><span style="letter-spacing:0.279px">5430 Tutt Blvd, Colorado Spri...</span></div><div class="c c4"><span style="letter-spacing:0.23px">(719) 380-0141</span></div><div class="c c5"><span style="letter-spacing:0.28px">North Powers</span></div></div>
<div class="row odd" style="top:345px"><div class="c c0"><span style="letter-spacing:-0.8px">CO</span></div><div class="c c1"><span style="letter-spacing:0.277px">North Powers Modern Dentistry</span></div><div class="c c2"><span style="letter-spacing:0.314px">https://www.northpowersmode...</span></div><div class="c c3"><span style="letter-spacing:0.279px">5430 Tutt Blvd, Colorado Spri...</span></div><div class="c c4"><span style="letter-spacing:0.23px">(719) 380-0141</span></div><div class="c c5"><span style="letter-spacing:0.28px">North Powers</span></div></div>
<div class="row" style="top:376px"><div class="c c0"><span style="letter-spacing:-0.8px">CO</span></div><div class="c c1"><span style="letter-spacing:0.277px">North Powers Modern Dentistry</span></div><div class="c c2"><span style="letter-spacing:0.314px">https://www.northpowersmode...</span></div><div class="c c3"><span style="letter-spacing:0.279px">5430 Tutt Blvd, Colorado Spri...</span></div><div class="c c4"><span style="letter-spacing:0.23px">(719) 380-0141</span></div><div class="c c5"><span style="letter-spacing:0.28px">North Powers</span></div></div>
<div class="row odd" style="top:407px;height:30px"><div class="c c0"><span style="letter-spacing:-0.8px">CO</span></div><div class="c c1"><span style="letter-spacing:0.277px">North Powers Modern Dentistry</span></div><div class="c c2"><span style="letter-spacing:0.314px">https://www.northpowersmode...</span></div><div class="c c3"><span style="letter-spacing:0.279px">5430 Tutt Blvd, Colorado Spri...</span></div><div class="c c4"><span style="letter-spacing:0.23px">(719) 380-0141</span></div><div class="c c5"><span style="letter-spacing:0.28px">North Powers</span></div></div>
<div class="row" style="top:437px"><div class="c c0"><span style="letter-spacing:-0.8px">CO</span></div><div class="c c1"><span style="letter-spacing:0.277px">North Powers Modern Dentistry</span></div><div class="c c2"><span style="letter-spacing:0.314px">https://www.northpowersmode...</span></div><div class="c c3"><span style="letter-spacing:0.279px">5430 Tutt Blvd, Colorado Spri...</span></div><div class="c c4"><span style="letter-spacing:0.23px">(719) 380-0141</span></div><div class="c c5"><span style="letter-spacing:0.28px">North Powers</span></div></div>
<div class="row odd" style="top:468px"><div class="c c0"><span style="letter-spacing:-0.8px">CO</span></div><div class="c c1"><span style="letter-spacing:0.277px">North Powers Modern Dentistry</span></div><div class="c c2"><span style="letter-spacing:0.314px">https://www.northpowersmode...</span></div><div class="c c3"><span style="letter-spacing:0.279px">5430 Tutt Blvd, Colorado Spri...</span></div><div class="c c4"><span style="letter-spacing:0.23px">(719) 380-0141</span></div><div class="c c5"><span style="letter-spacing:0.28px">North Powers</span></div></div>
<div class="row" style="top:499px"><div class="c c0"><span style="letter-spacing:-0.8px">CO</span></div><div class="c c1"><span style="letter-spacing:0.179px">The Dental Specialty Center of...</span></div><div class="c c2"><span style="letter-spacing:0.314px">https://www.dentalspecialtyce...</span></div><div class="c c3"><span style="letter-spacing:0.231px">7520 Bierstadt Heights #125, ...</span></div><div class="c c4"><span style="letter-spacing:0.392px">(719) 985-6541</span></div><div class="c c5"><span style="letter-spacing:0.2px">The Dental Sp</span></div></div>
<div class="row odd" style="top:530px"><div class="c c0"><span style="letter-spacing:-0.8px">CO</span></div><div class="c c1"><span style="letter-spacing:0.179px">The Dental Specialty Center of...</span></div><div class="c c2"><span style="letter-spacing:0.314px">https://www.dentalspecialtyce...</span></div><div class="c c3"><span style="letter-spacing:0.231px">7520 Bierstadt Heights #125, ...</span></div><div class="c c4"><span style="letter-spacing:0.392px">(719) 985-6541</span></div><div class="c c5"><span style="letter-spacing:0.2px">The Dental Sp</span></div></div>
<div class="row" style="top:561px"><div class="c c0"><span style="letter-spacing:-0.8px">CO</span></div><div class="c c1"><span style="letter-spacing:0.179px">The Dental Specialty Center of...</span></div><div class="c c2"><span style="letter-spacing:0.314px">https://www.dentalspecialtyce...</span></div><div class="c c3"><span style="letter-spacing:0.231px">7520 Bierstadt Heights #125, ...</span></div><div class="c c4"><span style="letter-spacing:0.392px">(719) 985-6541</span></div><div class="c c5"><span style="letter-spacing:0.2px">The Dental Sp</span></div></div>
<div class="row odd" style="top:592px"><div class="c c0"><span style="letter-spacing:-0.8px">CO</span></div><div class="c c1"><span style="letter-spacing:0.179px">The Dental Specialty Center of...</span></div><div class="c c2"><span style="letter-spacing:0.314px">https://www.dentalspecialtyce...</span></div><div class="c c3"><span style="letter-spacing:0.231px">7520 Bierstadt Heights #125, ...</span></div><div class="c c4"><span style="letter-spacing:0.392px">(719) 985-6541</span></div><div class="c c5"><span style="letter-spacing:0.2px">The Dental Sp</span></div></div>
</div>
<div id="vscroll"><div id="thumb"></div></div>
<div id="sidebar2">
  <div class="sb-line" style="top:17px"></div>
  <svg class="sb-ico" style="top:31px;left:7px" width="12" height="12" viewBox="0 0 12 12"><path d="M1 1.5h10L7 6.5v4L5 9V6.5z" fill="none" stroke="#333" stroke-width="1.3" stroke-linejoin="round"/></svg>
  <div class="sb-txt" style="top:52px">Filters</div>
  <div class="sb-line" style="top:101px"></div>
  <svg class="sb-ico" style="top:119px;left:7px" width="12" height="10" viewBox="0 0 12 10"><path d="M1.5 1v8M4.5 1v8M7.5 1v8M10.5 1v8" stroke="#333" stroke-width="1.2"/></svg>
  <div class="sb-txt" style="top:136px">Columns</div>
  <div class="sb-line" style="top:202px"></div>
</div>
</div>
<div id="handle"><i style="left:3px;top:3px"></i><i style="left:7px;top:3px"></i><i style="left:3px;top:7px"></i><i style="left:7px;top:7px"></i><i style="left:3px;top:11px"></i><i style="left:7px;top:11px"></i></div>
</div>
</div>
<svg id="cursor" width="70" height="90" viewBox="0 0 70 90"><defs><filter id="cs" x="-30%" y="-30%" width="180%" height="180%"><feGaussianBlur stdDeviation="2.2"/></filter></defs>
<polygon points="16,11.8 16,52.1 25,44.2 34.6,63.75 40,61.25 32.1,41 45,40.8" transform="translate(1,4)" fill="#000" opacity=".3" stroke="#000" stroke-width="7" filter="url(#cs)"/>
<polygon points="16,11.8 16,52.1 25,44.2 34.6,63.75 40,61.25 32.1,41 45,40.8" fill="#000" stroke="#fff" stroke-width="7" stroke-linejoin="miter" stroke-miterlimit="10" paint-order="stroke"/>
<polygon points="16,11.8 16,52.1 25,44.2 34.6,63.75 40,61.25 32.1,41 45,40.8" fill="#000"/>
</svg>
</body></html>
